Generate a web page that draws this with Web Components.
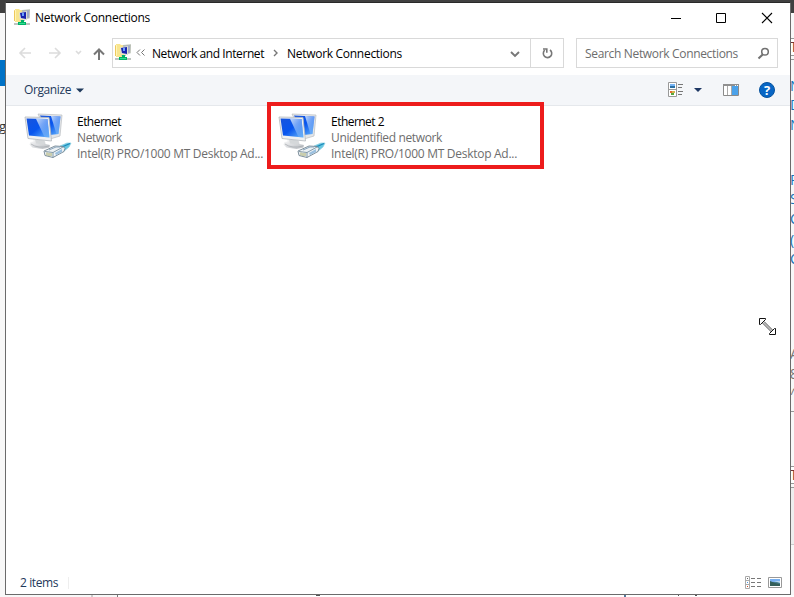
<!DOCTYPE html>
<html lang="en">
<head>
<meta charset="utf-8">
<title>Network Connections</title>
<style>
html,body{margin:0;width:794px;height:597px;overflow:hidden;background:#f8f8f8}
body{font:12px/16px "Open Sans","Noto Sans",sans-serif;color:#000}
</style>
</head>
<body>
<desktop-view>
<app-window>
<title-bar slot="title"></title-bar>
<address-row slot="address"></address-row>
<command-bar slot="commands"></command-bar>
<connection-item name="Ethernet" name-width="44" network="Network" network-width="45"></connection-item>
<connection-item name="Ethernet 2" name-width="53" network="Unidentified network" network-width="111" marked></connection-item>
<status-bar slot="status"></status-bar>
</app-window>
</desktop-view>
<script>
const define = (name, html, setup) => customElements.define(name, class extends HTMLElement {
  connectedCallback() {
    if (this.shadowRoot) return;
    const t = document.createElement('template');
    t.innerHTML = html;
    this.attachShadow({mode: 'open'}).append(t.content.cloneNode(true));
    if (setup) setup(this, this.shadowRoot);
  }
});

/* Label whose tracking is tuned to a given run width. */
define('fit-text', `<style>:host{display:block;white-space:nowrap}span{display:inline-block}</style><span><slot></slot></span>`, (el, root) => {
  const w = +el.getAttribute('w'), s = root.querySelector('span');
  el.style.width = w + 'px';
  const n = el.textContent.length;
  s.style.letterSpacing = ((w - s.getBoundingClientRect().width) / n) + 'px';
});

define('folder-icon', `<style>:host{display:block;width:16px;height:17px}svg{display:block}</style>
<svg width="16" height="17" viewBox="0 0 16 17">
<path d="M0 1.500 1 1h3v11H0z" fill="#eec95c"/><path d="M1 0h4l1 1h3v12H1z" fill="#f8e58e"/><path d="M1 1h1v11H1z" fill="#fff4b8"/>
<path d="M8 1l8-.8-.3 9L10 10.500 7.500 9z" fill="#b9bfb4"/><path d="M9 2l6-.7v7.200L9 9z" fill="#a3acc9"/>
<path d="M5 3.500 13 2v9L5.500 10z" fill="#dedfd3"/><path d="M6 4l6-1v7L7 9z" fill="#1823af"/><path d="M8 4l2-.2v3.200L8 7z" fill="#6aa0ff"/>
<path d="M6 11h5v1H6zM0 14h16v2H0z" fill="#bdc4c0"/><path d="M7 11h3v2h2v3H4v-3h3z" fill="#00b368"/><path d="M5 14h6v1H5z" fill="#35dd90"/></svg>`);

define('title-bar', `<style>
:host{display:flex;height:29px;align-items:center;padding:0 17px 0 8px;box-sizing:border-box}
fit-text{margin-left:5px;margin-top:1px}svg{margin-left:auto;display:block}
folder-icon{margin-top:-1px}
</style><folder-icon></folder-icon><fit-text w="115">Network Connections</fit-text>
<svg width="103" height="12" viewBox="0 0 103 12" fill="none" stroke="#000"><path d="M1 6.500h10M46.500 1.500h9v9h-9z"/><path d="M92 1l10 10M102 1l-10 10" stroke-width="1.100"/></svg>`);

define('address-row', `<style>
:host{display:flex;height:43px;padding:6px 12px 7px 12px;box-sizing:border-box}
.nav{width:94px;height:30px;flex:none}
.box{height:30px;box-sizing:border-box;border:1px solid #d9d9d9;display:flex;align-items:center;background:#fff}
.path{width:452px;padding-left:2px}.search{width:202px;margin-left:12px;padding:0 7px 0 8px;color:#6d6d6d}
svg{display:block;flex:none}fit-text{margin-top:1px}
folder-icon{margin-top:-1px}
.reload{margin-left:auto;width:32px;height:28px;border-left:1px solid #d9d9d9;display:grid;place-items:center}
.more{margin-left:5px}.c1{margin:0 9px 0 9px}.drop{margin-left:108px;margin-top:2px}.mag{margin-left:auto}
</style>
<svg class="nav" viewBox="0 0 94 30" fill="none"><g stroke="#dcdcdc" stroke-width="1.600"><path d="M13 15H2M7 10l-5 5 5 5M31 15h11M37 10l5 5-5 5"/><path d="M58 13l2.500 2.500L63 13"/></g><path d="M81 22V11M76 16.500l5-5 5 5" stroke="#777" stroke-width="2"/></svg>
<div class="box path"><folder-icon></folder-icon>
<svg class="more" width="10" height="10" viewBox="0 0 10 10" fill="none" stroke="#777"><path d="M4 1.500 1 4.500l3 3M8.500 1.500l-3 3 3 3"/></svg>
<fit-text w="112" style="margin-left:6px">Network and Internet</fit-text>
<svg class="c1" width="5" height="8" viewBox="0 0 5 8" fill="none" stroke="#777" stroke-width="1.400"><path d="M1 1l3 3-3 3"/></svg>
<fit-text w="115">Network Connections</fit-text>
<svg class="drop" width="10" height="8" viewBox="0 0 10 8" fill="none" stroke="#777" stroke-width="1.900"><path d="M1 2l4 4 4-4"/></svg>
<div class="reload"><svg width="12" height="12" viewBox="0 0 12 12" fill="none" stroke="#777" stroke-width="1.600"><path d="M9 3A4.200 4.200 0 1 1 3.800 3.200"/><path d="M2 2h3.800v3.800"/></svg></div></div>
<div class="box search"><fit-text w="153">Search Network Connections</fit-text>
<svg class="mag" width="13" height="13" viewBox="0 0 13 13" fill="none" stroke="#717171"><circle cx="8" cy="4.700" r="3.300" stroke-width="1.500"/><path d="M5.700 7.500 1.500 11.500" stroke-width="2"/></svg></div>`);

define('command-bar', `<style>
:host{display:flex;height:31px;box-sizing:border-box;background:#f4f6f9;border-bottom:1px solid #e5e8ec;align-items:center;padding:0 15px 0 18px;color:#1e395b}
svg{display:block}.arrow{margin-left:5px}.views{margin-left:auto}
</style><fit-text w="47">Organize</fit-text>
<svg class="arrow" width="8" height="5" viewBox="0 0 8 5"><path d="M0 .5h8L4 4.500z" fill="#1e395b"/></svg>
<svg class="views" width="108" height="18" viewBox="0 0 108 18">
<path d="M1.500 1.500h8v14h-8zM1 8.500h9" fill="#fff" stroke="#999"/><path d="M3 3h5v2H3z" fill="#78b5f5"/><path d="M3 5h5v2H3z" fill="#286fa5"/><path d="M3 10h2v2H3z" fill="#e26a3a"/><path d="M5 10h3v2H5z" fill="#d4b24a"/><path d="M4 12h3v2H4z" fill="#55a83e"/>
<path d="M11 3.500h5M11 6.500h4M11 10.500h5M11 13.500h4" stroke="#777"/>
<path d="M27 7h8l-4 4z" fill="#1f3864"/>
<path d="M56.500 3.500h15v11h-15z" fill="#fff" stroke="#8a8a8a"/><path d="M56 3h16v2H56z" fill="#909090"/><path d="M60.500 5v9M64.500 5v9" stroke="#aaa"/><path d="M65 5h6v9h-6z" fill="#4ba2ea"/><path d="M68 4h1v1h-1zM70 4h1v1h-1z" fill="#fff"/>
<circle cx="100" cy="9" r="7.500" fill="#0866c5" stroke="#07539e"/><text x="100" y="13.500" text-anchor="middle" font-family="Open Sans" font-size="13" font-weight="700" fill="#fff">?</text></svg>`);

define('monitor-icon', `<style>:host{display:block;width:48px;height:48px}svg{display:block}</style>
<svg width="48" height="48" viewBox="0 0 48 48">
<defs><linearGradient id="s" x1="0" y1="0" x2="1" y2="1"><stop offset="0" stop-color="#1854dc"/><stop offset=".5" stop-color="#0755ee"/><stop offset="1" stop-color="#69b8fa"/></linearGradient>
<linearGradient id="g" x1="0" y1="0" x2="1" y2="1"><stop offset="0" stop-color="#e3efff" stop-opacity=".85"/><stop offset="1" stop-color="#6aa9f5" stop-opacity=".3"/></linearGradient>
<linearGradient id="b" x1="0" y1="0" x2="1" y2="1"><stop offset="0" stop-color="#fff"/><stop offset="1" stop-color="#b5b9be"/></linearGradient></defs>
<path d="M14 1 38 2 36 23 26 26z" fill="#e4e6e8" stroke="#b9bdc1" stroke-width=".7"/><path d="M16 2.500 36.500 3.500 34.500 21 26 22z" fill="url(#s)"/><path d="M27 3l9.500.5-2 17.500-2 .3z" fill="url(#g)"/>
<path d="M9 26l12 2 .5 3 4.500 1-.5 2.500-7 1.500-10-1.500-3-3 1-2.500 3-.5z" fill="url(#b)"/><path d="M7 31q7 5 18 2" fill="none" stroke="#a9adb2" stroke-width=".8"/><path d="M11 26.500l9 1v4l-8-1z" fill="#d5d8da"/>
<path d="M1 4 25 4.500 27.500 28 4 25.500z" fill="#eff1f2" stroke="#b3b8bd" stroke-width=".8"/><path d="M2.500 5.500 23.500 6 25.500 24.500 5 22.500z" fill="url(#s)"/><path d="M12 5.800l11.500.2 2 18.500-5-.5z" fill="url(#g)"/>
<path d="M36 33l7-3h4l-2 4-6 5z" fill="#65c7e0" stroke="#8ccfe2" stroke-width=".7"/><path d="M38 34l8-3.500" stroke="#1b86b8" stroke-width="1.200"/>
<path d="M20 38l11-5 8 .5 2 2-1 3-11 6-8-2z" fill="#edf2f5" stroke="#718391" stroke-width=".9"/><path d="M21 38.500l8 1 10-5.500M29 39.500v5" fill="none" stroke="#77909f" stroke-width=".9"/><path d="M23 39.500v3M25 40v3M27 40v3" stroke="#a0a257" stroke-width=".9"/><path d="M31 40l7-4v3l-6 3z" fill="#9bc0df"/><path d="M25 37l7-3h4" fill="none" stroke="#8ba6bd"/></svg>`);

define('connection-item', `<style>
:host{display:flex;box-sizing:border-box;width:254px;height:56px;padding:3px 0 0 14px;position:relative;color:#6d6d6d}
.t{padding:1px 0 0 5px}.n{color:#000}
:host([marked])::after{content:"";position:absolute;left:3px;top:-8px;width:277px;height:67px;box-sizing:border-box;border:4px solid #ed1c1c}
</style><monitor-icon></monitor-icon><div class="t"></div>`, (el, root) => {
  root.querySelector('.t').innerHTML =
    `<fit-text class="n" w="${el.getAttribute('name-width')}">${el.getAttribute('name')}</fit-text>` +
    `<fit-text w="${el.getAttribute('network-width')}">${el.getAttribute('network')}</fit-text>` +
    `<fit-text w="186">Intel(R) PRO/1000 MT Desktop Ad...</fit-text>`;
});

define('status-bar', `<style>
:host{display:flex;height:23px;align-items:center;padding:0 8px 0 14px;color:#1e395b}
i{width:1px;height:12px;background:#eee;margin-left:10px}svg{margin-left:auto;display:block;margin-top:-1px}
</style><fit-text w="38">2 items</fit-text><i></i>
<svg width="38" height="15" viewBox="0 0 38 15" fill="none"><path d="M1.500 1.500h4v12h-4zM1 5.500h5M1 9.500h5" stroke="#aaa"/><path d="M3 3h1v1H3z" fill="#666"/><path d="M3 7h1v1H3z" fill="#4a9ae8"/><path d="M3 11h1v1H3z" fill="#d24a25"/><path d="M7 3.500h4M13 3.500h4M7 7.500h4M13 7.500h4M7 11.500h4M13 11.500h4" stroke="#777"/>
<path d="M24.500 2.500h13v10h-13z" fill="#fff" stroke="#999"/><path d="M26 4h10v3H26z" fill="#77aff0"/><path d="M26 7h10v4H26z" fill="#487f90"/><path d="M26 6l5 2 5 1v2H26z" fill="#345f59"/><path d="M30 6h6v2z" fill="#b8d7ee"/></svg>`);

define('app-window', `<style>
:host{display:flex;flex-direction:column;box-sizing:border-box;width:786px;height:593px;margin:2px 0 0 5px;border:1px solid #6b6b6b;border-top-color:#292929;background:#fff;position:relative}
main{display:flex;align-items:flex-start;flex:1;padding:4px 0 0 4px}
.cursor{position:absolute;left:752px;top:314px}
</style><slot name="title"></slot><slot name="address"></slot><slot name="commands"></slot><main><slot></slot></main><slot name="status"></slot>
<svg class="cursor" width="20" height="20" viewBox="0 0 20 20"><path d="M4.500 6 14 15.500M6 4.500 15.500 14" stroke="#444" fill="none"/><path d="M5.500 5.500l9 9" stroke="#bbb"/><path d="M1.500 1.500h6v1l-5 5h-1zM17.500 17.500h-6v-1l5-5h1z" fill="#fff" stroke="#111"/></svg>`);

/* The part of another window that shows round the edges. */
define('desktop-view', `<style>
:host{display:block;position:relative;width:794px;height:597px;overflow:hidden;background:#f8f8f8}
.d{position:absolute}.s{left:790px;width:4px;overflow:hidden;color:#1474b8;font-size:14px;line-height:16px;height:16px}
.s.k{color:#733}.s.z{color:#777}
</style>
<div class="d" style="left:0;top:0;width:794px;height:13px;background:#404040"></div>
<div class="d" style="left:0;top:60px;width:5px;height:26px;background:#0072c6"></div>
<div class="d" style="left:0;top:118px;width:6px;height:18px;overflow:hidden;color:#333"><span style="margin-left:-1px;font-size:13px">g</span></div>
<div class="d" style="left:791px;top:38px;width:3px;height:18px;box-sizing:border-box;background:#fff;border:solid #999;border-width:1px 0"></div>
<div class="d" style="left:791px;top:59px;width:3px;height:1px;background:#999"></div>
<div class="d s k" style="top:39px">T</div><div class="d s" style="top:78px">N</div><div class="d s" style="top:97px">D</div><div class="d s" style="top:117px">N</div>
<div class="d s" style="top:172px">R</div><div class="d s" style="top:191px">S</div><div class="d s" style="top:211px">C</div><div class="d s" style="top:232px">(</div><div class="d s" style="top:251px">C</div>
<div class="d s z" style="top:346px">A</div><div class="d s z" style="top:366px">8</div><div class="d s z" style="top:386px">^</div>
<div class="d" style="left:791px;top:411px;width:3px;height:1px;background:#999"></div>
<div class="d" style="left:791px;top:466px;width:3px;height:18px;box-sizing:border-box;background:#fff;border:solid #999;border-width:1px 0"></div>
<div class="d s k" style="top:467px">T</div>
<div class="d" style="left:791px;top:487px;width:3px;height:58px;background:#eee;border-top:1px solid #999;border-bottom:1px solid #ccc;box-sizing:border-box"></div>
<div class="d" style="left:118px;top:595px;width:676px;height:2px;background:#fff"></div>
<div class="d" style="left:91px;top:595px;width:2px;height:2px;background:#ccc"></div>
<div class="d" style="left:117px;top:595px;width:1px;height:2px;background:#777"></div>
<div class="d" style="left:316px;top:595px;width:4px;height:1px;background:#555"></div>
<div class="d" style="left:624px;top:595px;width:2px;height:2px;background:#579"></div>
<div class="d" style="left:678px;top:595px;width:1px;height:1px;background:#555"></div>
<div class="d" style="left:695px;top:595px;width:2px;height:1px;background:#555"></div>
<div style="display:flow-root;position:relative"><slot></slot></div>`);
</script>
</body>
</html>
